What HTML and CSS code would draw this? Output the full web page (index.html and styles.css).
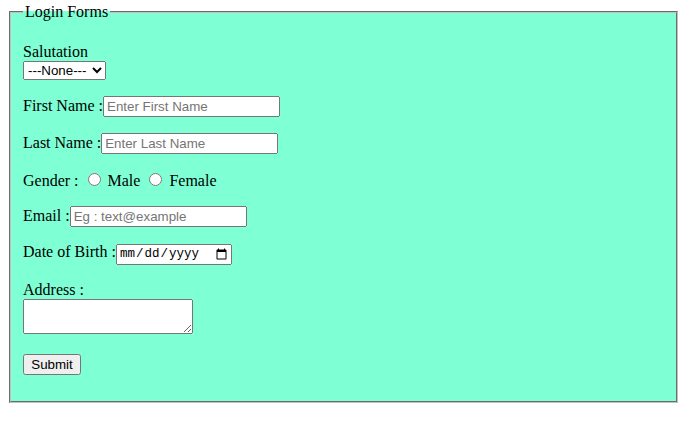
FILE: index.html
```html
<!DOCTYPE html>
<html>
<head>
<meta charset="utf-8">
<title>Login Forms</title>
<link rel="stylesheet" href="styles.css">
</head>
<body>
<form class="form">
<fieldset class="box">
<legend class="legend">Login Forms</legend>
<p class="row">Salutation<br>
<select class="select">
<option>---None---</option>
<option>Mr.</option>
<option>Ms.</option>
<option>Mrs.</option>
</select></p>
<p class="row">First Name :<input type="text" class="field" placeholder="Enter First Name"></p>
<p class="row">Last Name :<input type="text" class="field" placeholder="Enter Last Name"></p>
<p class="row">Gender : <input type="radio" name="gender" class="radio"> Male <input type="radio" name="gender" class="radio"> Female</p>
<p class="row">Email :<input type="email" class="field" placeholder="Eg : text@example"></p>
<p class="row">Date of Birth :<input type="date" class="date"></p>
<p class="row">Address :<br><textarea class="area"></textarea></p>
<p class="row"><button type="submit" class="btn">Submit</button></p>
</fieldset>
</form>
</body>
</html>
```
FILE: styles.css
```css
body {
  margin: 3px 8px 8px;
  font-family: "Liberation Serif", "Times New Roman", serif;
  font-size: 16px;
  color: #000;
  background: #fff;
}
.box {
  background: #7fffd4;
  border: 2px groove #c0c0c0;
  margin: 0 1px;
  width: 641px;
  padding: 6px 12px 10px;
}
.legend {
  padding: 0 2px;
}
.row {
  margin: 16px 0;
}
.field, .select, .date, .area, .btn {
  font-family: "Liberation Sans", Arial, sans-serif;
  font-size: 13.333px;
}
.field {
  width: 177px;
  height: 21px;
  box-sizing: border-box;
}
.select {
  width: 83px;
}
.date {
  width: 116px;
  height: 21px;
  box-sizing: border-box;
  font-family: "Liberation Mono", "DejaVu Sans Mono", monospace;
  font-size: 12.5px;
}
.area {
  width: 164px;
  height: 29px;
}
.btn {
  width: 58px;
}
```
